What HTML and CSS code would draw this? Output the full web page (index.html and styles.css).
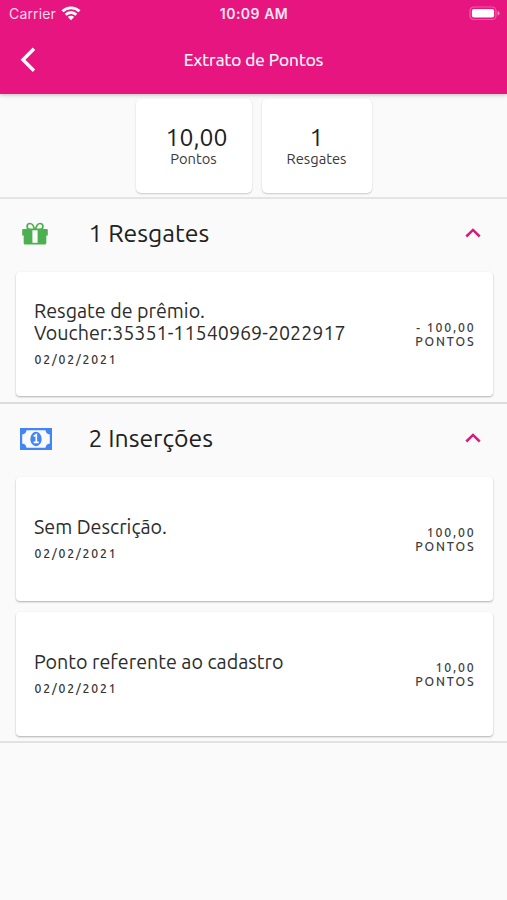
FILE: index.html
```html
<!DOCTYPE html>
<html lang="pt-BR">
<head>
<meta charset="utf-8">
<meta name="viewport" content="width=device-width, initial-scale=1">
<title>Extrato de Pontos</title>
<link rel="stylesheet" href="styles.css">
</head>
<body>
<header class="header">
  <div class="status">
    <div class="carrier"><span>Carrier</span>
      <svg class="wifi" width="20" height="15" viewBox="0 0 20 15" fill="none" stroke="#fff" stroke-width="2.9"><path d="M1.500 5.300a12.300 12.300 0 0 1 17 0M4.700 8.700a7.600 7.600 0 0 1 10.600 0"/><path d="M10 14.200 6.800 11a4.600 4.600 0 0 1 6.400 0z" fill="#fff" stroke="none"/></svg>
    </div>
    <time class="clock">10:09 AM</time>
    <svg class="battery" width="32" height="15" viewBox="0 0 32 15"><rect x="1" y="1" width="26" height="12.500" rx="3.800" fill="none" stroke="#f05fa8" stroke-width="1.200"/><rect x="2.900" y="2.900" width="22.200" height="8.700" rx="2" fill="#fff"/><path d="M28.600 5q2 .5 2 2.200t-2 2.300z" fill="#f28abf"/></svg>
  </div>
  <div class="toolbar">
    <svg class="back" width="16" height="26" viewBox="0 0 16 26" fill="none" stroke="#fff" stroke-width="3.400"><path d="M14 1.800 3 12.800l11 11"/></svg>
    <h1 class="title">Extrato de Pontos</h1>
  </div>
</header>
<main>
  <section class="summary">
    <div class="stat points"><strong>10,00</strong><span>Pontos</span></div>
    <div class="stat redeems"><strong>1</strong><span>Resgates</span></div>
  </section>
  <section class="group first">
    <div class="group-head">
      <span class="icon"><svg width="26" height="23" viewBox="0 0 26 23"><path fill="#4caf50" d="M1.200 7h23.600q1 0 1 1v5.500h-1.500V21q0 1.500-1.500 1.500H3.200Q1.700 22.500 1.700 21v-7.500H.2V8q0-1 1-1z"/><path fill="#fafafa" stroke="#4caf50" stroke-width="1.700" d="M12.600 7.300C11.700 4 10.200 1.500 8 1.500a2.900 2.900 0 0 0 0 5.800zM13.400 7.300C14.300 4 15.800 1.500 18 1.500a2.900 2.900 0 0 1 0 5.800z"/><path fill="#fff" d="M10.400 8.300h5.200v12.500h-5.200z"/></svg></span>
      <h2>1 Resgates</h2>
      <svg class="chevron" width="16" height="10" viewBox="0 0 16 10" fill="none" stroke="#d81b7b" stroke-width="2.500"><path d="m1.300 8.500 6.700-6.600 6.700 6.600"/></svg>
    </div>
    <article class="entry">
      <div class="info"><p>Resgate de prêmio.</p><p>Voucher:35351-11540969-2022917</p><time>02/02/2021</time></div>
      <div class="amount"><span>- 100,00</span><span>PONTOS</span></div>
    </article>
  </section>
  <section class="group second">
    <div class="group-head">
      <span class="icon"><svg width="32" height="22" viewBox="0 0 32 22"><path fill="#4285f4" fill-rule="evenodd" d="M0 0h32v22H0zM6.500 2.200Q6 6 2.200 6.500v9Q6 16 6.500 19.800h19q.5-3.800 4.300-4.300v-9Q26 6 25.500 2.200z"/><ellipse cx="16" cy="11" rx="5.700" ry="7.200" fill="#4285f4"/><path d="m13.700 8.300 2.600-1.600v7.500m-2.700.2h5.100" fill="none" stroke="#fff" stroke-width="1.700"/></svg></span>
      <h2>2 Inserções</h2>
      <svg class="chevron" width="16" height="10" viewBox="0 0 16 10" fill="none" stroke="#d81b7b" stroke-width="2.500"><path d="m1.300 8.500 6.700-6.600 6.700 6.600"/></svg>
    </div>
    <article class="entry">
      <div class="info"><p>Sem Descrição.</p><time>02/02/2021</time></div>
      <div class="amount"><span>100,00</span><span>PONTOS</span></div>
    </article>
    <article class="entry">
      <div class="info"><p>Ponto referente ao cadastro</p><time>02/02/2021</time></div>
      <div class="amount"><span>10,00</span><span>PONTOS</span></div>
    </article>
  </section>
</main>
</body>
</html>
```
FILE: styles.css
```css
* { box-sizing: border-box; margin: 0; }
body { min-height: 900px; background: #fafafa; color: #212121; font-family: Ubuntu, "Noto Sans", sans-serif; }
svg { display: block; flex: none; }
.header { height: 94px; background: #e6157f; color: #fff; box-shadow: 0 1px 4px rgba(0,0,0,.25); }
.status { height: 27px; padding: 0 6px 0 9px; display: grid; grid-template-columns: 1fr auto 1fr; align-items: center; font-family: Inter, sans-serif; }
.carrier { display: flex; align-items: center; gap: 5px; font-size: 14px; letter-spacing: .15px; color: #ffd9ec; }
.wifi { margin-top: -1px; }
.clock { font-size: 14px; font-weight: 600; color: #ffe6f3; letter-spacing: .52px; margin-right: 2px; }
.battery { justify-self: end; }
.toolbar { height: 66px; display: grid; grid-template-columns: 36px 1fr 36px; align-items: center; }
.back { margin-left: 20px; }
.title { text-align: center; font-size: 17.250px; font-weight: 400; color: #fff; line-height: 24px; -webkit-text-stroke: .2px #fff; }
.summary { height: 105px; padding-top: 5px; display: flex; justify-content: center; gap: 10px; border-bottom: 2px solid #e4e4e4; }
.stat { height: 94px; padding-top: 26px; display: flex; flex-direction: column; align-items: center; background: #fff; border-radius: 5px; box-shadow: 0 1px 2px rgba(0,0,0,.2); }
.points { width: 116px; }
.redeems { width: 110px; }
.stat strong { font-size: 24.700px; font-weight: 400; line-height: 25px; }
.points strong { padding-left: 6px; }
.stat span { font-size: 14.700px; line-height: 18px; color: #3a3a3a; }
.group { padding: 0 14.500px 0 15.500px; border-bottom: 2px solid #dcdcdc; }
.first { height: 205px; }
.second { height: 339px; border-color: #e2e2e2; }
.group-head { height: 73px; padding: 0 12px 4px 5px; display: flex; align-items: center; }
.icon { width: 68px; flex: none; }
.first .icon { padding-left: 1.500px; }
.second .icon svg { margin-left: -.500px; }
.chevron { margin-top: -1px; }
.group-head h2 { flex: 1; margin-top: -1px; font-size: 24.800px; font-weight: 400; line-height: 32px; white-space: nowrap; }
.entry { height: 124px; margin-bottom: 11px; padding: 0 18px 0 18.500px; display: flex; align-items: center; justify-content: space-between; background: #fff; border-radius: 4px; box-shadow: 0 1px 2px rgba(0,0,0,.3); }
.info { white-space: nowrap; }
.info p { font-size: 19.700px; line-height: 22px; color: #2c2c2c; }
.info time { display: block; margin-top: 8px; padding-left: .500px; font-size: 12.200px; font-weight: 500; line-height: 16px; letter-spacing: 1.850px; color: #333; }
.amount { display: flex; flex-direction: column; align-items: flex-end; font-size: 12.300px; font-weight: 500; line-height: 13.500px; letter-spacing: 1.850px; margin: 1px -1px 0 0; color: #3c3c3c; }
```
